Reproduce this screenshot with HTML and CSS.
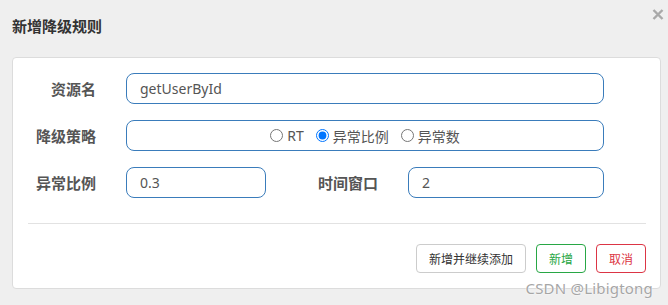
FILE: index.html
```html
<!DOCTYPE html>
<html lang="zh-CN">
<head>
<meta charset="utf-8">
<title>新增降级规则</title>
<link rel="stylesheet" href="styles.css">
</head>
<body>
<div class="dialog">
  <div class="header">
    <h4 class="title">新增降级规则</h4>
    <span class="close">
      <svg width="12" height="11" viewBox="0 0 12 11"><path d="M1.5 1 L10.5 10 M10.5 1 L1.5 10" stroke="#a9a9a9" stroke-width="2.4" fill="none"/></svg>
    </span>
  </div>
  <div class="panel">
    <form class="form">
      <div class="row">
        <label class="label">资源名</label>
        <input class="input" type="text" value="getUserById">
      </div>
      <div class="row">
        <label class="label">降级策略</label>
        <div class="input radios">
          <label class="radio"><input type="radio" name="grade"><span>RT</span></label>
          <label class="radio"><input type="radio" name="grade" checked><span>异常比例</span></label>
          <label class="radio"><input type="radio" name="grade"><span>异常数</span></label>
        </div>
      </div>
      <div class="row row-split">
        <label class="label">异常比例</label>
        <input class="input" type="text" value="0.3">
        <label class="label">时间窗口</label>
        <input class="input" type="text" value="2">
      </div>
    </form>
    <div class="divider"></div>
    <div class="actions">
      <button class="btn btn-default" type="button">新增并继续添加</button>
      <button class="btn btn-success" type="button">新增</button>
      <button class="btn btn-danger" type="button">取消</button>
    </div>
  </div>
  <div class="watermark">CSDN @Libigtong</div>
</div>
</body>
</html>
```

FILE: styles.css
```css
* { box-sizing: border-box; }
html, body {
  margin: 0;
  padding: 0;
  background: #efefef;
}
body {
  font-family: "Noto Sans", "Noto Sans CJK SC", sans-serif;
  color: #555;
  width: 668px;
  height: 305px;
  overflow: hidden;
}
.dialog {
  position: relative;
  height: 305px;
}
.header {
  height: 57px;
  display: flex;
  justify-content: space-between;
  align-items: flex-start;
  padding: 0 4px 0 12px;
}
.title {
  margin: 16px 0 0;
  font-size: 15px;
  line-height: 20px;
  font-weight: bold;
  color: #333;
}
.close {
  margin-top: 9px;
  display: flex;
}
.panel {
  margin: 0 7px 0 12px;
  background: #fff;
  border: 1px solid #dcdcdc;
  border-radius: 4px;
  padding: 15px 14px 15px 0;
}
.form {
  display: flex;
  flex-direction: column;
  gap: 16px;
  padding-right: 42px;
}
.row {
  display: grid;
  grid-template-columns: 83px 1fr;
  column-gap: 30px;
  align-items: center;
  height: 31px;
}
.row-split {
  grid-template-columns: 83px 140px 82px 1fr;
}
.label {
  text-align: right;
  font-size: 15px;
  font-weight: bold;
  color: #555;
  white-space: nowrap;
}
.input {
  height: 31px;
  border: 1px solid #3a7cbb;
  border-radius: 8px;
  padding: 0 13px;
  font-family: inherit;
  font-size: 14px;
  color: #555;
  background: #fff;
  outline: none;
  width: 100%;
}
.radios {
  display: flex;
  justify-content: center;
  align-items: center;
  gap: 12px;
}
.radio {
  display: flex;
  align-items: center;
  font-size: 14px;
  color: #555;
}
.radio input {
  margin: 0 4px 0 0;
  width: 13px;
  height: 13px;
}
.divider {
  height: 1px;
  background: #e2e2e2;
  margin: 25px 0 20px 15px;
}
.actions {
  display: flex;
  justify-content: flex-end;
  gap: 10px;
}
.btn {
  height: 29px;
  padding: 0 12px;
  font-family: inherit;
  font-size: 12px;
  background: #fff;
  border: 1px solid #ccc;
  border-radius: 4px;
  color: #333;
}
.btn-success {
  border-color: #28a745;
  color: #28a745;
}
.btn-danger {
  border-color: #dc3545;
  color: #dc3545;
}
.watermark {
  position: absolute;
  right: 15px;
  top: 278px;
  font-size: 15px;
  color: #a6a6a6;
  letter-spacing: 0.2px;
  text-shadow: 0 0 2px #fff, 0 0 1px #fff;
}
```
